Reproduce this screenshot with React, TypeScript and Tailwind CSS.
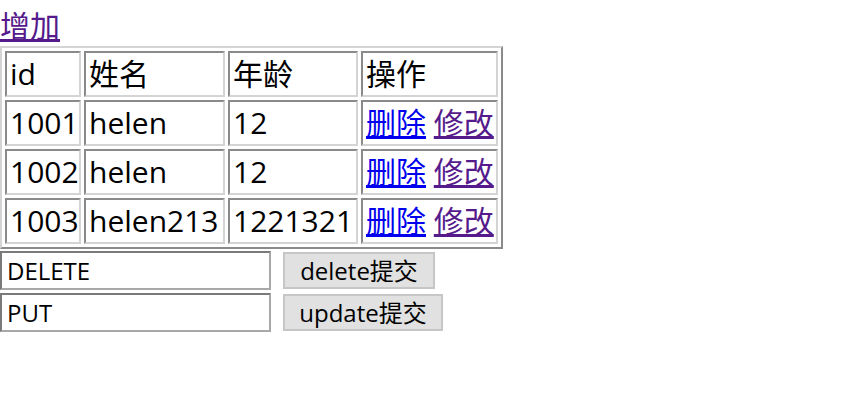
import React from "react";

const rows = [
  { id: "1001", name: "helen", age: "12" },
  { id: "1002", name: "helen", age: "12" },
  { id: "1003", name: "helen213", age: "1221321" },
];

const cell =
  "h-[46px] px-[3px] py-0 leading-[40px] border-2 border-t-[#8a8a8a] border-l-[#8a8a8a] border-b-[#d4d4d4] border-r-[#d4d4d4] whitespace-nowrap";

const field =
  "w-[271px] h-[39px] px-[5px] border-2 border-t-[#7a7a7a] border-l-[#7a7a7a] border-b-[#a8a8a8] border-r-[#a8a8a8] outline-none";

const App: React.FC = () => {
  return (
    <div className="min-h-screen bg-white text-black text-[30px] font-['Open_Sans','Noto_Sans_CJK_SC',sans-serif]">
      {/* 增加 链接 */}
      <div className="h-[46px] leading-[40px] pt-[6px]">
        <a href="#" className="text-[#551a8b] underline">
          增加
        </a>
      </div>

      {/* 列表 */}
      <table className="table-fixed w-[503px] border-separate border-spacing-[3px] border-2 border-t-[#d4d4d4] border-l-[#d4d4d4] border-b-[#8a8a8a] border-r-[#8a8a8a] font-normal">
        <colgroup>
          <col className="w-[76px]" />
          <col className="w-[141px]" />
          <col className="w-[130px]" />
          <col className="w-[137px]" />
        </colgroup>
        <thead>
          <tr>
            <th className={`${cell} text-left font-normal`}>id</th>
            <th className={`${cell} text-left font-normal`}>姓名</th>
            <th className={`${cell} text-left font-normal`}>年龄</th>
            <th className={`${cell} text-left font-normal`}>操作</th>
          </tr>
        </thead>
        <tbody>
          {rows.map((r) => (
            <tr key={r.id}>
              <td className={cell}>{r.id}</td>
              <td className={cell}>{r.name}</td>
              <td className={cell}>{r.age}</td>
              <td className={cell}>
                <a href="#" className="text-[#0000ee] underline">
                  删除
                </a>{" "}
                <a href="#" className="text-[#551a8b] underline">
                  修改
                </a>
              </td>
            </tr>
          ))}
        </tbody>
      </table>

      {/* 提交表单 */}
      <div className="flex flex-col gap-[3px] mt-[2px] text-[24px]">
        <div className="flex items-center gap-[12px]">
          <input defaultValue="DELETE" className={field} />
          <button className="w-[152px] h-[37px] leading-none bg-[#e1e1e1] border-2 border-[#c6c6c6]">
            delete提交
          </button>
        </div>
        <div className="flex items-center gap-[12px]">
          <input defaultValue="PUT" className={field} />
          <button className="w-[160px] h-[37px] leading-none bg-[#e1e1e1] border-2 border-[#c6c6c6]">
            update提交
          </button>
        </div>
      </div>
    </div>
  );
};

export default App;
